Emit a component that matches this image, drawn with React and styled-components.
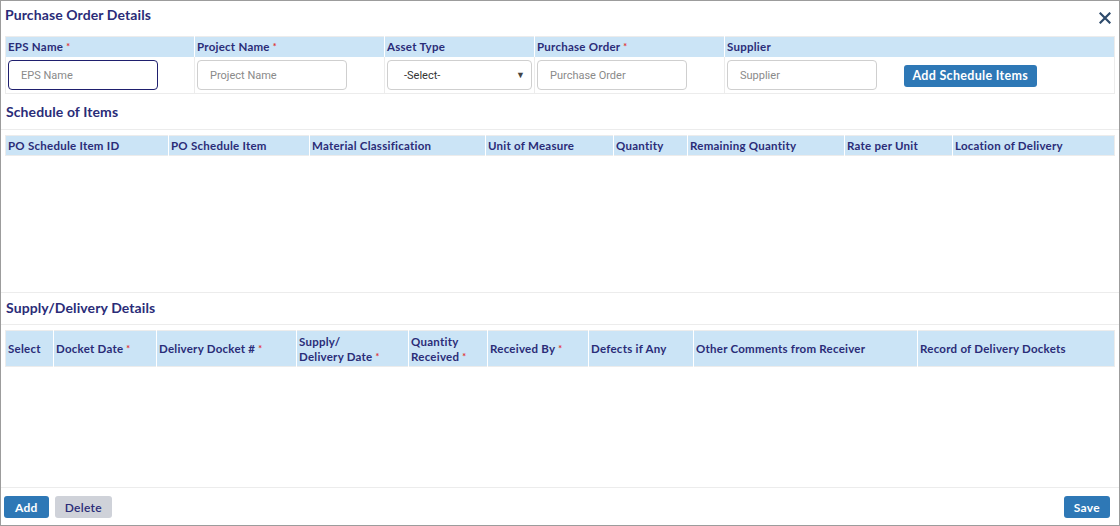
import React from "react";
import styled, { createGlobalStyle } from "styled-components";

const GlobalStyle = createGlobalStyle`
  html, body { margin: 0; padding: 0; background: #fff; }
  body { font-family: Lato, "Open Sans", sans-serif; }
  * { box-sizing: border-box; }
`;

const NAVY = "#2a2c78";
const HEAD_BG = "#cbe4f6";

const Modal = styled.div`
  width: 1120px;
  height: 526px;
  border: 1px solid #9c9c9c;
  display: flex;
  flex-direction: column;
  padding: 0 5px 0 4px;
  background: #fff;
`;

const TitleBar = styled.div`
  height: 35px;
  display: flex;
  align-items: flex-start;
  justify-content: space-between;
  padding-top: 5px;
`;

const Title = styled.h2`
  margin: 0;
  font-size: 14px;
  font-weight: 700;
  color: ${NAVY};
  line-height: 17px;
  letter-spacing: 0.1px;
`;

const CloseButton = styled.button`
  border: none;
  background: none;
  padding: 0;
  margin-top: 6px;
  margin-right: 3px;
  width: 12px;
  height: 12px;
  cursor: pointer;
  display: flex;
`;

const Table = styled.table`
  width: 1109px;
  border-collapse: collapse;
  table-layout: fixed;
  border: 1px solid #ececec;
`;

const Th = styled.th`
  background: ${HEAD_BG};
  color: ${NAVY};
  font-size: 11.5px;
  font-weight: 700;
  letter-spacing: 0.25px;
  text-align: left;
  padding: 0 2px;
  height: ${(p) => (p.$tall ? "36px" : "20px")};
  line-height: 15px;
  border-right: 1px solid #fff;
  white-space: nowrap;
  &:last-child { border-right: none; }
`;

const Td = styled.td`
  height: 37px;
  padding: 1px 2px 0;
  border-right: ${(p) => (p.$noLine ? "none" : "1px solid #ececec")};
  vertical-align: middle;
  &:last-child { border-right: none; }
`;

const Req = styled.span`
  color: #e03232;
  font-size: 9px;
  vertical-align: top;
  margin-left: 3px;
`;

const Input = styled.input`
  width: 150px;
  height: 30px;
  border: 1px solid ${(p) => (p.$focused ? "#1f1f6e" : "#cfcfcf")};
  border-radius: 4px;
  padding: 0 12px;
  font-family: Roboto, sans-serif;
  font-size: 11px;
  color: #333;
  outline: none;
  &::placeholder { color: #8a8a8a; }
`;

const SelectBox = styled.div`
  width: 145px;
  height: 30px;
  border: 1px solid #cfcfcf;
  border-radius: 4px;
  padding: 0 6px 0 16px;
  display: flex;
  align-items: center;
  justify-content: space-between;
  font-family: Roboto, sans-serif;
  font-size: 11px;
  color: #333;
`;

const Caret = styled.span`
  font-size: 9px;
  color: #444;
`;

const Button = styled.button`
  height: 22px;
  padding: 0 ${(p) => p.$px || 9}px;
  border: none;
  border-radius: 3px;
  background: ${(p) => (p.$muted ? "#cfd2d9" : "#2e78b6")};
  color: ${(p) => (p.$muted ? NAVY : "#fff")};
  font-family: Lato, sans-serif;
  font-size: ${(p) => p.$fs || 12}px;
  font-weight: ${(p) => (p.$muted ? 600 : 700)};
  letter-spacing: 0.3px;
  cursor: pointer;
  margin-left: ${(p) => p.$ml || 0}px;
`;

const SectionHead = styled.div`
  height: ${(p) => p.$h}px;
  display: flex;
  align-items: center;
  border-top: ${(p) => (p.$topLine ? "1px solid #ececec" : "none")};
  border-bottom: 1px solid #ececec;
  margin: 0 -5px 0 -4px;
  padding: 0 5px 0 5px;
  padding-bottom: ${(p) => p.$pb || 0}px;
`;

const SectionTitle = styled.h3`
  margin: 0;
  font-size: 14px;
  font-weight: 700;
  color: ${NAVY};
  letter-spacing: 0.1px;
`;

const TableArea = styled.div`
  height: 162px;
  padding-top: 5px;
`;

const Footer = styled.div`
  flex: 1;
  display: flex;
  align-items: center;
  justify-content: space-between;
  border-top: 1px solid #ececec;
  margin: 0 -5px 0 -4px;
  padding: 1px 9px 0 3px;
`;

const Group = styled.div`
  display: flex;
  align-items: center;
`;

const scheduleCols = [
  ["PO Schedule Item ID", 163],
  ["PO Schedule Item", 141],
  ["Material Classification", 176],
  ["Unit of Measure", 128],
  ["Quantity", 74],
  ["Remaining Quantity", 157],
  ["Rate per Unit", 108],
  ["Location of Delivery", 162],
];

const deliveryCols = [
  [["Select"], 48, false],
  [["Docket Date"], 103, true],
  [["Delivery Docket #"], 140, true],
  [["Supply/", "Delivery Date"], 112, true],
  [["Quantity", "Received"], 79, true],
  [["Received By"], 101, true],
  [["Defects if Any"], 105, false],
  [["Other Comments from Receiver"], 224, false],
  [["Record of Delivery Dockets"], 197, false],
];

const formCols = [189, 190, 150, 190, 170, 220];

function CloseIcon() {
  return (
    <svg width="12" height="12" viewBox="0 0 12 12">
      <path d="M1.5 1.5 L10.5 10.5 M10.5 1.5 L1.5 10.5" stroke="#2d4a6b" strokeWidth="2.2" strokeLinecap="square" />
    </svg>
  );
}

export default function App() {
  return (
    <>
      <GlobalStyle />
      <Modal>
        <TitleBar>
          <Title>Purchase Order Details</Title>
          <CloseButton aria-label="Close">
            <CloseIcon />
          </CloseButton>
        </TitleBar>

        <Table>
          <colgroup>
            {formCols.map((w, i) => (
              <col key={i} style={{ width: w }} />
            ))}
          </colgroup>
          <thead>
            <tr>
              <Th>EPS Name<Req>*</Req></Th>
              <Th>Project Name<Req>*</Req></Th>
              <Th>Asset Type</Th>
              <Th>Purchase Order<Req>*</Req></Th>
              <Th colSpan={2}>Supplier</Th>
            </tr>
          </thead>
          <tbody>
            <tr>
              <Td><Input placeholder="EPS Name" $focused /></Td>
              <Td><Input placeholder="Project Name" /></Td>
              <Td>
                <SelectBox>
                  <span>-Select-</span>
                  <Caret>▼</Caret>
                </SelectBox>
              </Td>
              <Td><Input placeholder="Purchase Order" /></Td>
              <Td $noLine><Input placeholder="Supplier" /></Td>
              <Td>
                <Button $ml={7} $fs={12.5}>Add Schedule Items</Button>
              </Td>
            </tr>
          </tbody>
        </Table>

        <SectionHead $h={36} $pb={1}>
          <SectionTitle>Schedule of Items</SectionTitle>
        </SectionHead>
        <TableArea>
          <Table>
            <colgroup>
              {scheduleCols.map(([, w], i) => (
                <col key={i} style={{ width: w }} />
              ))}
            </colgroup>
            <thead>
              <tr>
                {scheduleCols.map(([label]) => (
                  <Th key={label}>{label}</Th>
                ))}
              </tr>
            </thead>
          </Table>
        </TableArea>

        <SectionHead $h={33} $pb={3} $topLine>
          <SectionTitle>Supply/Delivery Details</SectionTitle>
        </SectionHead>
        <TableArea>
          <Table>
            <colgroup>
              {deliveryCols.map(([, w], i) => (
                <col key={i} style={{ width: w }} />
              ))}
            </colgroup>
            <thead>
              <tr>
                {deliveryCols.map(([lines, , req]) => (
                  <Th key={lines.join(" ")} $tall>
                    {lines.map((l, i) => (
                      <React.Fragment key={l}>
                        {i > 0 && <br />}
                        {l}
                      </React.Fragment>
                    ))}
                    {req && <Req>*</Req>}
                  </Th>
                ))}
              </tr>
            </thead>
          </Table>
        </TableArea>

        <Footer>
          <Group>
            <Button $px={11}>Add</Button>
            <Button $muted $px={10} $ml={6}>Delete</Button>
          </Group>
          <Button $px={10}>Save</Button>
        </Footer>
      </Modal>
    </>
  );
}
